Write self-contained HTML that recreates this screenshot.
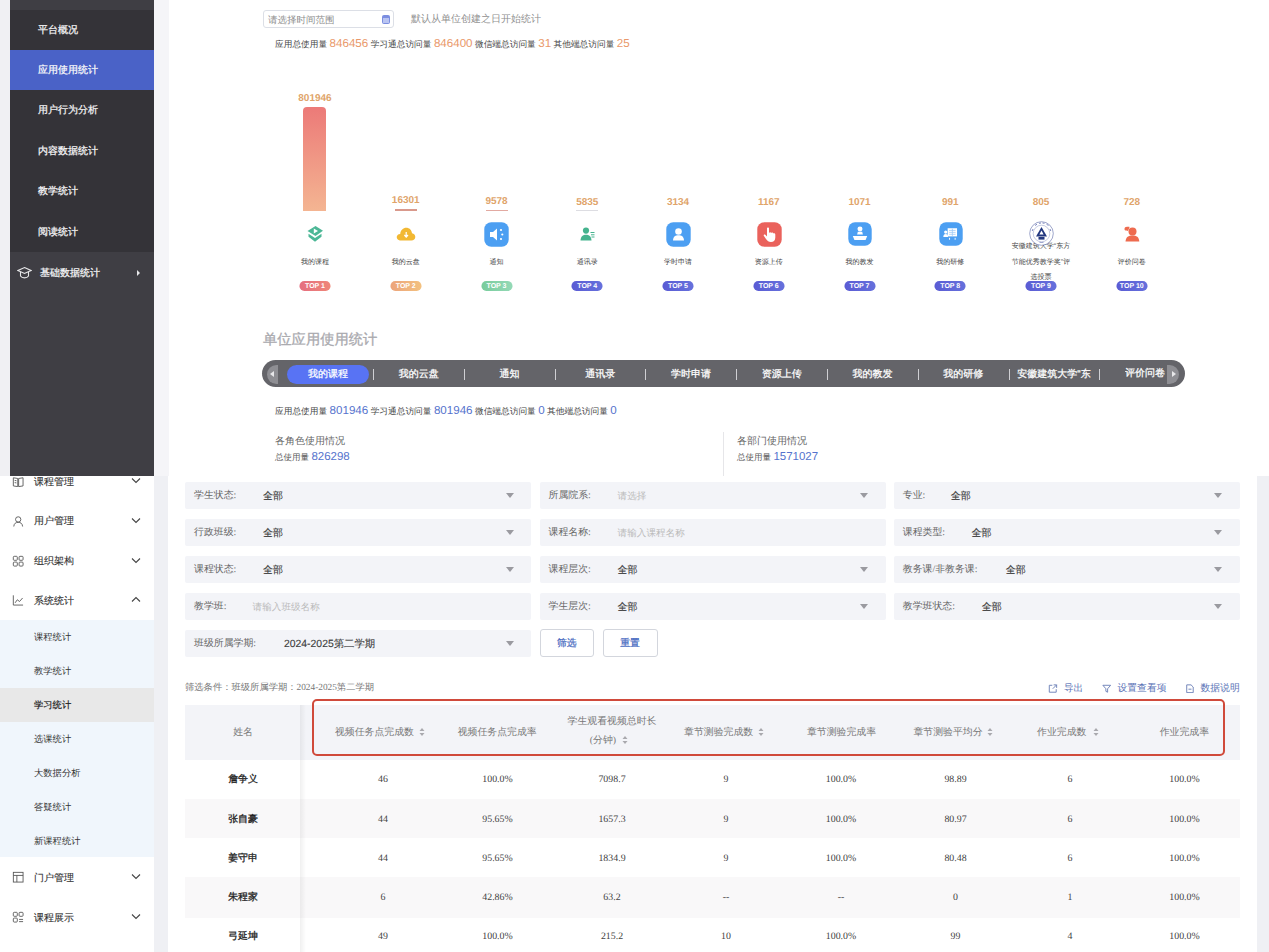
<!DOCTYPE html>
<html><head><meta charset="utf-8">
<style>
*{margin:0;padding:0;box-sizing:border-box}
html,body{width:1269px;height:952px;overflow:hidden;background:#fff;font-family:"Liberation Sans",sans-serif;position:relative;text-rendering:geometricPrecision}
.a{position:absolute;white-space:nowrap}
.c{transform:translateX(-50%)}
.serif{font-family:"Liberation Serif",serif}
/* top sidebar */
#sbTop{position:absolute;left:10px;top:0;width:144px;height:476px;background:#3f3e44}
.ditem{position:absolute;left:10px;width:144px;height:40px;background:#343338;color:#f4f4f6;font-size:10px;-webkit-text-stroke:0.25px #f4f4f6;line-height:41.5px;padding-left:28px}
/* chart */
.val{position:absolute;font-size:10px;font-weight:bold;color:#e0a46a;transform:translateX(-50%);line-height:12px}
.lbl{position:absolute;font-size:7px;color:#444;transform:translateX(-50%);line-height:10px;text-align:center}
.top{position:absolute;width:31px;height:9.6px;border-radius:4.8px;color:#fff;font-size:7px;font-weight:bold;line-height:11px;text-align:center;transform:translateX(-50%)}
.sbar{position:absolute;width:22px;height:2px;transform:translateX(-50%)}
/* tab bar */
.tab{position:absolute;top:361px;color:#fff;font-size:10px;-webkit-text-stroke:0.25px #fff;line-height:27px;transform:translateX(-50%)}
.sep{position:absolute;top:368.5px;width:1px;height:11.5px;background:#cfcfd3}
/* bottom sidebar */
.litem{position:absolute;left:0;width:154px;height:40px;font-size:10px;color:#333;line-height:40px}
.sub{position:absolute;left:34px;font-size:9.3px;color:#333;line-height:12px}
/* filter */
.fbox{position:absolute;width:346px;height:27.5px;background:#f3f4f8;border-radius:2px}
.flbl{position:absolute;top:0;left:9px;font-family:"Liberation Serif",serif;font-size:9.9px;line-height:28.3px;color:#666}
.fval{position:absolute;top:0;font-size:10px;-webkit-text-stroke:0.1px #3a3a3a;line-height:30px;color:#3a3a3a}
.fph{position:absolute;top:0;font-size:9.6px;line-height:29px;color:#bbb}
.farr{position:absolute;top:11.3px;right:17.5px;width:0;height:0;border-left:4px solid transparent;border-right:4px solid transparent;border-top:5px solid #9a9aa0}
/* table */
.th{position:absolute;font-family:"Liberation Serif",serif;font-size:9.9px;color:#777;line-height:14px;transform:translateX(-50%)}
.td{position:absolute;font-family:"Liberation Serif",serif;font-size:9.9px;color:#444;line-height:15px;transform:translateX(-50%)}
</style></head><body>
<!-- ===== TOP HALF ===== -->
<div class="a" style="left:0;top:0;width:10px;height:476px;background:#f0f0f3"></div>
<div class="a" style="left:154px;top:0;width:15px;height:476px;background:#f5f5f8"></div>
<div id="sbTop"></div>
<div class="ditem" style="top:10px">平台概况</div>
<div class="ditem" style="top:50px;background:#4a62c7;color:#fff">应用使用统计</div>
<div class="ditem" style="top:90.4px;height:41px">用户行为分析</div>
<div class="ditem" style="top:130.8px;height:41px">内容数据统计</div>
<div class="ditem" style="top:171.2px;height:41px">教学统计</div>
<div class="ditem" style="top:211.6px;height:40.4px">阅读统计</div>
<div class="a" style="left:40px;top:267px;font-size:10px;-webkit-text-stroke:0.25px #f4f4f6;color:#f4f4f6;line-height:13px">基础数据统计</div>


<!-- top content -->
<div class="a" style="left:262.5px;top:10px;width:131px;height:18px;border:1px solid #dcdfe6;border-radius:3px;background:#fff"></div>
<div class="a" style="left:268px;top:15.2px;font-size:9.5px;line-height:12px;color:#8e8e8e">请选择时间范围</div>
<div class="a" style="left:382px;top:15px;width:8px;height:9px;border-radius:2px;background:#7b8ee0"></div>
<div class="a" style="left:383px;top:18px;width:6px;height:5px;background:#b9c4f2"></div>
<div class="a" style="left:411px;top:13.6px;font-size:10px;line-height:12px;color:#909090">默认从单位创建之日开始统计</div>
<div class="a" style="left:275px;top:36.8px;line-height:13px;color:#444;font-size:8.7px">应用总使用量 <span style="font-size:11.6px;color:#e9986a">846456</span> 学习通总访问量 <span style="font-size:11.6px;color:#e9986a">846400</span> 微信端总访问量 <span style="font-size:11.6px;color:#e9986a">31</span> 其他端总访问量 <span style="font-size:11.6px;color:#e9986a">25</span></div>
<div class="val" style="left:315.0px;top:93px">801946</div>
<div class="a" style="left:303.4px;top:107px;width:22.7px;height:104px;border-radius:4px 4px 0 0;background:linear-gradient(#ec7a78,#f4b592)"></div>
<div class="lbl" style="left:315.0px;top:258px">我的课程</div>
<div class="top" style="left:315.0px;top:281px;background:linear-gradient(90deg,#e56e80,#ef8778)">TOP 1</div>
<div class="val" style="left:405.75px;top:195px">16301</div>
<div class="lbl" style="left:405.75px;top:258px">我的云盘</div>
<div class="top" style="left:405.75px;top:281px;background:linear-gradient(90deg,#eca47c,#f3c17f)">TOP 2</div>
<div class="val" style="left:496.5px;top:196px">9578</div>
<div class="lbl" style="left:496.5px;top:258px">通知</div>
<div class="top" style="left:496.5px;top:281px;background:linear-gradient(90deg,#78cc9c,#94d9b6)">TOP 3</div>
<div class="val" style="left:587.25px;top:197px">5835</div>
<div class="lbl" style="left:587.25px;top:258px">通讯录</div>
<div class="top" style="left:587.25px;top:281px;background:linear-gradient(90deg,#5a5cd4,#6670dc)">TOP 4</div>
<div class="val" style="left:678.0px;top:197px">3134</div>
<div class="lbl" style="left:678.0px;top:258px">学时申请</div>
<div class="top" style="left:678.0px;top:281px;background:linear-gradient(90deg,#5a5cd4,#6670dc)">TOP 5</div>
<div class="val" style="left:768.75px;top:197px">1167</div>
<div class="lbl" style="left:768.75px;top:258px">资源上传</div>
<div class="top" style="left:768.75px;top:281px;background:linear-gradient(90deg,#5a5cd4,#6670dc)">TOP 6</div>
<div class="val" style="left:859.5px;top:197px">1071</div>
<div class="lbl" style="left:859.5px;top:258px">我的教发</div>
<div class="top" style="left:859.5px;top:281px;background:linear-gradient(90deg,#5a5cd4,#6670dc)">TOP 7</div>
<div class="val" style="left:950.25px;top:197px">991</div>
<div class="lbl" style="left:950.25px;top:258px">我的研修</div>
<div class="top" style="left:950.25px;top:281px;background:linear-gradient(90deg,#5a5cd4,#6670dc)">TOP 8</div>
<div class="val" style="left:1041.0px;top:197px">805</div>
<div class="lbl" style="left:1041.0px;top:239px;line-height:15.6px">安徽建筑大学“东方<br>节能优秀教学奖”评<br>选投票</div>
<div class="top" style="left:1041.0px;top:281px;background:linear-gradient(90deg,#5a5cd4,#6670dc)">TOP 9</div>
<div class="val" style="left:1131.75px;top:197px">728</div>
<div class="lbl" style="left:1131.75px;top:258px">评价问卷</div>
<div class="top" style="left:1131.75px;top:281px;background:linear-gradient(90deg,#5a5cd4,#6670dc)">TOP 10</div>


<!-- icons -->
<svg class="a" style="left:306px;top:225px" width="18" height="18" viewBox="0 0 18 18">
<path d="M9.5 1 L17 5.8 L9.5 11 L1.5 6 Z" fill="#4cb796"/>
<path d="M2.5 8.8 L9 13 L15.5 8.8 L15.5 11.8 L9 16.8 L2.5 11.8 Z" fill="#4cb796"/>
<path d="M7.8 3.6 L12 6 L7.8 8.6 Z" fill="#fff"/>
</svg>
<svg class="a" style="left:396px;top:227px" width="20" height="14" viewBox="0 0 20 14">
<path d="M5 13.5 C1.5 13.5 0.5 11 0.8 9.5 C1.2 7.5 3 6.8 4.2 6.9 C4.6 3.2 7.2 0.8 10.2 0.8 C13.3 0.8 15.6 3 16 6.2 C18 6.4 19.4 8 19.3 10 C19.2 12 17.6 13.5 15.5 13.5 Z" fill="#f2b832"/>
<path d="M10.2 5 L10.2 9.5 M8.4 8 L10.2 10 L12 8" stroke="#fff" stroke-width="1.2" fill="none"/>
</svg>
<svg class="a" style="left:484px;top:222px" width="25" height="25" viewBox="0 0 25 25">
<rect x="0.3" y="0.3" width="24.4" height="24.4" rx="7" fill="#4c9ff2"/>
<path d="M6 10 L9 10 L13 6.5 L13 18.5 L9 15 L6 15 Z" fill="#fff"/>
<circle cx="17" cy="8" r="1.1" fill="#fff"/><circle cx="18.3" cy="12.5" r="1.1" fill="#fff"/><circle cx="17" cy="17" r="1.1" fill="#fff"/>
</svg>
<svg class="a" style="left:579px;top:226px" width="17" height="16" viewBox="0 0 17 16">
<circle cx="7" cy="4.6" r="3.1" fill="#45b38e"/>
<path d="M1.5 14.5 C1.8 10.3 4 8.8 7 8.8 C10 8.8 12.2 10.3 12.5 14.5 Z" fill="#45b38e"/>
<path d="M11.5 6.5 L15.5 6.5 M12 8.8 L15.5 8.8 M12.5 11 L15.5 11" stroke="#45b38e" stroke-width="1"/>
</svg>
<svg class="a" style="left:666px;top:222px" width="25" height="25" viewBox="0 0 25 25">
<rect x="0.3" y="0.3" width="24.4" height="24.4" rx="7" fill="#4c9ff2"/>
<circle cx="12.5" cy="9.5" r="3.3" fill="#fff"/>
<path d="M7 18.5 C7.2 14.5 9.5 13.3 12.5 13.3 C15.5 13.3 17.8 14.5 18 18.5 Z" fill="#fff"/>
</svg>
<svg class="a" style="left:757px;top:222px" width="25" height="25" viewBox="0 0 25 25">
<rect x="0.3" y="0.3" width="24.4" height="24.4" rx="7" fill="#ea625c"/>
<path d="M10 6.5 C10 5.2 12 5.2 12 6.5 L12 11 C12.5 10 14 10.2 14.2 11 C14.8 10.3 16.2 10.6 16.4 11.5 C17 11 18.3 11.4 18.3 12.5 L18.3 15.5 C18.3 18.5 16.5 20 14 20 C11.5 20 10.5 19 9 17 L6.8 13.8 C6.2 12.8 7.5 12 8.3 12.8 L10 14.5 Z" fill="#fff"/>
</svg>
<svg class="a" style="left:848px;top:222px" width="24" height="24" viewBox="0 0 25 25">
<rect x="0.3" y="0.3" width="24.4" height="24.4" rx="7" fill="#4c9ff2"/>
<circle cx="12.5" cy="7.3" r="2.6" fill="#fff"/>
<path d="M10.2 10.2 L14.8 10.2 L15.5 13 L9.5 13 Z" fill="#fff"/>
<path d="M5 14.5 L20 14.5 L18.3 18.8 L6.7 18.8 Z" fill="#fff"/>
</svg>
<svg class="a" style="left:938.5px;top:222px" width="24" height="24" viewBox="0 0 25 25">
<rect x="0.3" y="0.3" width="24.4" height="24.4" rx="7" fill="#4c9ff2"/>
<rect x="9" y="6.5" width="9.8" height="8.5" fill="#fff"/>
<path d="M10.5 8.8 L17.3 8.8 M10.5 10.8 L17.3 10.8 M10.5 12.8 L17.3 12.8 M13.9 7 L13.9 14.5" stroke="#9ccaf7" stroke-width="0.8"/>
<circle cx="7" cy="10.5" r="1.7" fill="#fff"/>
<path d="M4.5 15.5 C4.6 13.3 5.6 12.6 7 12.6 C8.4 12.6 9.4 13.3 9.5 15.5 Z" fill="#fff"/>
<path d="M11 16.5 L11 18.5 M16.8 16.5 L16.8 18.5" stroke="#fff" stroke-width="1"/>
</svg>
<svg class="a" style="left:1028.5px;top:221px" width="25" height="25" viewBox="0 0 25 25">
<circle cx="12.5" cy="12.5" r="11.8" fill="#fff" stroke="#5c6aa8" stroke-width="0.6"/>
<circle cx="12.5" cy="12.5" r="8.3" fill="#fff" stroke="#8a94c4" stroke-width="0.5"/>
<path d="M6 4.5 L8 3.2 M10 2.3 L12 2 M13.5 2 L15.5 2.3 M17.5 3.2 L19.5 4.5 M4 8 L3.2 10 M21 8 L21.8 10" stroke="#6e7ab8" stroke-width="0.9"/>
<path d="M12.5 6 L18 15.5 L7 15.5 Z" fill="#22377f"/>
<path d="M12.5 9.5 L14.6 13.5 L10.4 13.5 Z" fill="#fff"/>
<rect x="9.5" y="16" width="6" height="2.6" fill="#22377f"/>
<path d="M10.5 21.5 L14.5 21.5" stroke="#8a94c4" stroke-width="0.8"/>
</svg>
<svg class="a" style="left:1122px;top:224px" width="20" height="20" viewBox="0 0 20 20">
<circle cx="10.5" cy="7.5" r="4" fill="#ee6b4f"/>
<path d="M3.5 17.5 C3.8 13 6.5 11.5 10.5 11.5 C14.5 11.5 17 13 17.3 17.5 Z" fill="#ee6b4f"/>
<path d="M2.5 5 C2.5 3.5 3.5 2.8 5 2.8 L7 2.8 C7.5 2.8 7.6 3.3 7.4 3.7 L6 7 L4.5 6.5 C3 6.5 2.5 6 2.5 5 Z" fill="#ee6b4f"/>
</svg>
<div class="sbar" style="left:405.75px;top:209px;background:#d9998c"></div>
<div class="sbar" style="left:496.5px;top:209.5px;height:1.5px;background:#e2aaa2"></div>
<div class="sbar" style="left:587.25px;top:209.5px;height:1.5px;background:#dddde2"></div>
<!-- section 2 -->
<div class="a" style="left:263px;top:331px;font-size:14.3px;line-height:18px;color:#a9a9ae;-webkit-text-stroke:0.3px #a9a9ae">单位应用使用统计</div>
<div class="a" style="left:262px;top:360px;width:923px;height:27px;border-radius:13.5px;background:#646469"></div>
<div class="a" style="left:266.5px;top:364.5px;width:11.5px;height:19px;border-radius:9.5px 0 0 9.5px;background:#8e8e93"></div>
<div class="a" style="left:269.5px;top:371px;width:0;height:0;border-top:3px solid transparent;border-bottom:3px solid transparent;border-right:4px solid #e8e8ea"></div>
<div class="a" style="left:1167px;top:364.5px;width:11.5px;height:19px;border-radius:0 9.5px 9.5px 0;background:#8e8e93"></div>
<div class="a" style="left:1171.5px;top:371px;width:0;height:0;border-top:3px solid transparent;border-bottom:3px solid transparent;border-left:4px solid #e8e8ea"></div>
<div class="a" style="left:287px;top:364.5px;width:82px;height:19.5px;border-radius:10px;background:#5873f4"></div>
<div class="tab" style="left:328.0px">我的课程</div>
<div class="tab" style="left:418.75px">我的云盘</div>
<div class="tab" style="left:509.5px">通知</div>
<div class="tab" style="left:600.25px">通讯录</div>
<div class="tab" style="left:691.0px">学时申请</div>
<div class="tab" style="left:781.75px">资源上传</div>
<div class="tab" style="left:872.5px">我的教发</div>
<div class="tab" style="left:963.25px">我的研修</div>
<div class="tab" style="left:1054px">安徽建筑大学“东</div>
<div class="a" style="left:1125px;top:360px;width:40px;overflow:hidden;color:#fff;font-size:10px;-webkit-text-stroke:0.25px #fff;line-height:28px">评价问卷</div>
<div class="sep" style="left:373px"></div>
<div class="sep" style="left:464px"></div>
<div class="sep" style="left:554.7px"></div>
<div class="sep" style="left:645px"></div>
<div class="sep" style="left:736px"></div>
<div class="sep" style="left:827px"></div>
<div class="sep" style="left:918px"></div>
<div class="sep" style="left:1009px"></div>
<div class="sep" style="left:1099px"></div>

<div class="a" style="left:275px;top:403.5px;line-height:13px;color:#444;font-size:8.7px">应用总使用量 <span style="font-size:11.6px;color:#5573cd">801946</span> 学习通总访问量 <span style="font-size:11.6px;color:#5573cd">801946</span> 微信端总访问量 <span style="font-size:11.6px;color:#5573cd">0</span> 其他端总访问量 <span style="font-size:11.6px;color:#5573cd">0</span></div>
<div class="a" style="left:275px;top:435px;font-size:10px;line-height:13px;color:#666">各角色使用情况</div>
<div class="a" style="left:275px;top:450.5px;font-size:8.5px;line-height:13px;color:#555">总使用量 <span style="font-size:11.5px;color:#5573cd">826298</span></div>
<div class="a" style="left:722.5px;top:432px;width:1px;height:44px;background:#e6e6e9"></div>
<div class="a" style="left:737px;top:435px;font-size:10px;line-height:13px;color:#666">各部门使用情况</div>
<div class="a" style="left:737px;top:450.5px;font-size:8.5px;line-height:13px;color:#555">总使用量 <span style="font-size:11.5px;color:#5573cd">1571027</span></div>

<!-- ===== BOTTOM HALF ===== -->
<div class="a" style="left:0;top:476px;width:154px;height:476px;background:#fff"></div>
<div class="a" style="left:154px;top:476px;width:14px;height:476px;background:#eff0f4"></div>
<div class="a" style="left:1257px;top:476px;width:12px;height:476px;background:#eff0f4"></div>


<!-- bottom sidebar -->
<div class="a" style="left:0;top:619.5px;width:154px;height:237.5px;background:#f0f6fc"></div>
<div class="a" style="left:0;top:688px;width:154px;height:33.5px;background:#e8e8e8"></div>
<div class="a" style="left:34px;top:475.7px;font-size:10px;line-height:13px;color:#333;-webkit-text-stroke:0.12px #333">课程管理</div>
<div class="a" style="left:34px;top:515.2px;font-size:10px;line-height:13px;color:#333;-webkit-text-stroke:0.12px #333">用户管理</div>
<div class="a" style="left:34px;top:555.2px;font-size:10px;line-height:13px;color:#333;-webkit-text-stroke:0.12px #333">组织架构</div>
<div class="a" style="left:34px;top:594.7px;font-size:10px;line-height:13px;color:#333;-webkit-text-stroke:0.12px #333">系统统计</div>
<div class="sub" style="top:630.5px">课程统计</div>
<div class="sub" style="top:664.5px">教学统计</div>
<div class="sub" style="top:698.5px;-webkit-text-stroke:0.2px #222;color:#222">学习统计</div>
<div class="sub" style="top:733px">选课统计</div>
<div class="sub" style="top:767px">大数据分析</div>
<div class="sub" style="top:800.5px">答疑统计</div>
<div class="sub" style="top:834.5px">新课程统计</div>
<div class="a" style="left:34px;top:871.8px;font-size:10px;line-height:13px;color:#333;-webkit-text-stroke:0.12px #333">门户管理</div>
<div class="a" style="left:34px;top:912px;font-size:10px;line-height:13px;color:#333;-webkit-text-stroke:0.12px #333">课程展示</div>
<div class="a" style="left:34px;top:952px;font-size:10px;line-height:13px;color:#333;-webkit-text-stroke:0.12px #333">数据管理</div>
<svg class="a" style="left:11.8px;top:475.8px" width="12.4" height="11.5" viewBox="0 0 14 13"><path d="M1.5 2 L6.5 2.8 L6.5 12 L1.5 11.2 Z M12.5 2 L7.5 2.8 L7.5 12 L12.5 11.2 Z M3 5 L5 5.3 M3 7.5 L5 7.8" stroke="#555" stroke-width="1" fill="none"/></svg>
<svg class="a" style="left:11.8px;top:514.8px" width="12.4" height="12.4" viewBox="0 0 14 14"><circle cx="7" cy="5" r="3" stroke="#555" stroke-width="1" fill="none"/><path d="M2 13 C2.3 9.5 4.3 8.3 7 8.3 C9.7 8.3 11.7 9.5 12 13" stroke="#555" stroke-width="1" fill="none"/></svg>
<svg class="a" style="left:11.8px;top:554.8px" width="12.4" height="12.4" viewBox="0 0 14 14"><rect x="1.5" y="1.5" width="4.5" height="4.5" rx="1" stroke="#555" stroke-width="1" fill="none"/><rect x="8" y="1.5" width="4.5" height="4.5" rx="1" stroke="#555" stroke-width="1" fill="none"/><rect x="1.5" y="8" width="4.5" height="4.5" rx="1" stroke="#555" stroke-width="1" fill="none"/><rect x="8" y="8" width="4.5" height="4.5" rx="1" stroke="#555" stroke-width="1" fill="none"/></svg>
<svg class="a" style="left:11.8px;top:593.8px" width="12.4" height="12.4" viewBox="0 0 14 14"><path d="M1.5 1.5 L1.5 12.5 L12.5 12.5" stroke="#555" stroke-width="1" fill="none"/><path d="M3.5 10 L6 6.5 L8.5 8.5 L12 4.5" stroke="#555" stroke-width="1" fill="none"/></svg>
<svg class="a" style="left:11.8px;top:870.8px" width="12.4" height="12.4" viewBox="0 0 14 14"><rect x="1.5" y="1.5" width="11" height="11" stroke="#555" stroke-width="1" fill="none"/><path d="M1.5 5 L12.5 5 M5.5 5 L5.5 12.5" stroke="#555" stroke-width="1" fill="none"/></svg>
<svg class="a" style="left:11.8px;top:910.8px" width="12.4" height="12.4" viewBox="0 0 14 14"><rect x="1.5" y="1.5" width="4.5" height="4.5" rx="1" stroke="#555" stroke-width="1" fill="none"/><rect x="8" y="1.5" width="4.5" height="4.5" rx="1" stroke="#555" stroke-width="1" fill="none"/><rect x="1.5" y="8" width="4.5" height="4.5" rx="1" stroke="#555" stroke-width="1" fill="none"/><path d="M8 9.5 L12.5 9.5 M8 12 L12.5 12" stroke="#555" stroke-width="1" fill="none"/></svg>
<svg class="a" style="left:131px;top:477px" width="10" height="7" viewBox="0 0 10 7"><path d="M1 1.5 L5 5.5 L9 1.5" stroke="#444" stroke-width="1.1" fill="none"/></svg>
<svg class="a" style="left:131px;top:517px" width="10" height="7" viewBox="0 0 10 7"><path d="M1 1.5 L5 5.5 L9 1.5" stroke="#444" stroke-width="1.1" fill="none"/></svg>
<svg class="a" style="left:131px;top:557px" width="10" height="7" viewBox="0 0 10 7"><path d="M1 1.5 L5 5.5 L9 1.5" stroke="#444" stroke-width="1.1" fill="none"/></svg>
<svg class="a" style="left:131px;top:873px" width="10" height="7" viewBox="0 0 10 7"><path d="M1 1.5 L5 5.5 L9 1.5" stroke="#444" stroke-width="1.1" fill="none"/></svg>
<svg class="a" style="left:131px;top:913px" width="10" height="7" viewBox="0 0 10 7"><path d="M1 1.5 L5 5.5 L9 1.5" stroke="#444" stroke-width="1.1" fill="none"/></svg>
<svg class="a" style="left:131px;top:596px" width="10" height="7" viewBox="0 0 10 7"><path d="M1 5.5 L5 1.5 L9 5.5" stroke="#444" stroke-width="1.1" fill="none"/></svg>
<svg class="a" style="left:17px;top:266px" width="15" height="14" viewBox="0 0 15 14"><path d="M7.5 1.5 L14 4.5 L7.5 7.5 L1 4.5 Z" stroke="#e6e6e8" stroke-width="1.1" fill="none"/><path d="M3.5 6 L3.5 10 C5 12.5 10 12.5 11.5 10 L11.5 6" stroke="#e6e6e8" stroke-width="1.1" fill="none"/></svg>
<div class="a" style="left:137px;top:269.5px;width:0;height:0;border-top:3px solid transparent;border-bottom:3px solid transparent;border-left:3.5px solid #e6e6e8"></div>
<!-- table -->
<div class="a" style="left:185px;top:705px;width:1055px;height:55px;background:#f3f4f8"></div>
<div class="a" style="left:185px;top:760.0px;width:1055px;height:39.5px;background:#fff"></div>
<div class="a" style="left:185px;top:798.8px;width:1055px;height:39.5px;background:#f9f8f9"></div>
<div class="a" style="left:185px;top:839.0px;width:1055px;height:39.5px;background:#fff"></div>
<div class="a" style="left:185px;top:877.4px;width:1055px;height:40.2px;background:#f9f8f9"></div>
<div class="a" style="left:185px;top:918.0px;width:1055px;height:39.5px;background:#fff"></div>
<div class="a" style="left:300px;top:705px;width:6px;height:247px;background:linear-gradient(to right,rgba(0,0,0,0.06),rgba(0,0,0,0))"></div>
<div class="th" style="left:243px;top:726px">姓名</div>
<div class="th" style="left:374.4px;top:726px">视频任务点完成数</div>
<svg class="a" style="left:419px;top:726.8px" width="6" height="10" viewBox="0 0 6 10"><path d="M0.5 4 L3 1 L5.5 4 Z M0.5 6 L3 9 L5.5 6 Z" fill="#a9a9ae"/></svg>
<div class="th" style="left:497.2px;top:726px">视频任务点完成率</div>
<div class="th" style="left:718.6px;top:726px">章节测验完成数</div>
<svg class="a" style="left:758px;top:726.8px" width="6" height="10" viewBox="0 0 6 10"><path d="M0.5 4 L3 1 L5.5 4 Z M0.5 6 L3 9 L5.5 6 Z" fill="#a9a9ae"/></svg>
<div class="th" style="left:841.5px;top:726px">章节测验完成率</div>
<div class="th" style="left:948px;top:726px">章节测验平均分</div>
<svg class="a" style="left:987px;top:726.8px" width="6" height="10" viewBox="0 0 6 10"><path d="M0.5 4 L3 1 L5.5 4 Z M0.5 6 L3 9 L5.5 6 Z" fill="#a9a9ae"/></svg>
<div class="th" style="left:1061.8px;top:726px">作业完成数</div>
<svg class="a" style="left:1092.5px;top:726.8px" width="6" height="10" viewBox="0 0 6 10"><path d="M0.5 4 L3 1 L5.5 4 Z M0.5 6 L3 9 L5.5 6 Z" fill="#a9a9ae"/></svg>
<div class="th" style="left:1184.4px;top:726px">作业完成率</div>
<div class="th" style="left:612px;top:714.5px">学生观看视频总时长</div>
<div class="th" style="left:603px;top:733.5px">(分钟)</div>
<svg class="a" style="left:622px;top:734.5px" width="6" height="10" viewBox="0 0 6 10"><path d="M0.5 4 L3 1 L5.5 4 Z M0.5 6 L3 9 L5.5 6 Z" fill="#a9a9ae"/></svg>
<div class="a" style="left:311.5px;top:698.8px;width:913.5px;height:57.2px;border:2.7px solid #d04a3b;border-radius:5px"></div>
<div class="td" style="left:243px;top:772.1px;-webkit-text-stroke:0.3px #222;color:#222;">詹争义</div>
<div class="td" style="left:383px;top:773.7px;line-height:12.6px">46</div>
<div class="td" style="left:497.5px;top:773.7px;line-height:12.6px">100.0%</div>
<div class="td" style="left:612px;top:773.7px;line-height:12.6px">7098.7</div>
<div class="td" style="left:726px;top:773.7px;line-height:12.6px">9</div>
<div class="td" style="left:841px;top:773.7px;line-height:12.6px">100.0%</div>
<div class="td" style="left:955.5px;top:773.7px;line-height:12.6px">98.89</div>
<div class="td" style="left:1070px;top:773.7px;line-height:12.6px">6</div>
<div class="td" style="left:1184.5px;top:773.7px;line-height:12.6px">100.0%</div>
<div class="td" style="left:243px;top:811.5px;-webkit-text-stroke:0.3px #222;color:#222;">张自豪</div>
<div class="td" style="left:383px;top:813.6px;line-height:12.6px">44</div>
<div class="td" style="left:497.5px;top:813.6px;line-height:12.6px">95.65%</div>
<div class="td" style="left:612px;top:813.6px;line-height:12.6px">1657.3</div>
<div class="td" style="left:726px;top:813.6px;line-height:12.6px">9</div>
<div class="td" style="left:841px;top:813.6px;line-height:12.6px">100.0%</div>
<div class="td" style="left:955.5px;top:813.6px;line-height:12.6px">80.97</div>
<div class="td" style="left:1070px;top:813.6px;line-height:12.6px">6</div>
<div class="td" style="left:1184.5px;top:813.6px;line-height:12.6px">100.0%</div>
<div class="td" style="left:243px;top:850.7px;-webkit-text-stroke:0.3px #222;color:#222;">姜守申</div>
<div class="td" style="left:383px;top:852.5px;line-height:12.6px">44</div>
<div class="td" style="left:497.5px;top:852.5px;line-height:12.6px">95.65%</div>
<div class="td" style="left:612px;top:852.5px;line-height:12.6px">1834.9</div>
<div class="td" style="left:726px;top:852.5px;line-height:12.6px">9</div>
<div class="td" style="left:841px;top:852.5px;line-height:12.6px">100.0%</div>
<div class="td" style="left:955.5px;top:852.5px;line-height:12.6px">80.48</div>
<div class="td" style="left:1070px;top:852.5px;line-height:12.6px">6</div>
<div class="td" style="left:1184.5px;top:852.5px;line-height:12.6px">100.0%</div>
<div class="td" style="left:243px;top:889.9px;-webkit-text-stroke:0.3px #222;color:#222;">朱程家</div>
<div class="td" style="left:383px;top:891.6px;line-height:12.6px">6</div>
<div class="td" style="left:497.5px;top:891.6px;line-height:12.6px">42.86%</div>
<div class="td" style="left:612px;top:891.6px;line-height:12.6px">63.2</div>
<div class="td" style="left:726px;top:891.6px;line-height:12.6px">--</div>
<div class="td" style="left:841px;top:891.6px;line-height:12.6px">--</div>
<div class="td" style="left:955.5px;top:891.6px;line-height:12.6px">0</div>
<div class="td" style="left:1070px;top:891.6px;line-height:12.6px">1</div>
<div class="td" style="left:1184.5px;top:891.6px;line-height:12.6px">100.0%</div>
<div class="td" style="left:243px;top:929.1px;-webkit-text-stroke:0.3px #222;color:#222;">弓延坤</div>
<div class="td" style="left:383px;top:930.7px;line-height:12.6px">49</div>
<div class="td" style="left:497.5px;top:930.7px;line-height:12.6px">100.0%</div>
<div class="td" style="left:612px;top:930.7px;line-height:12.6px">215.2</div>
<div class="td" style="left:726px;top:930.7px;line-height:12.6px">10</div>
<div class="td" style="left:841px;top:930.7px;line-height:12.6px">100.0%</div>
<div class="td" style="left:955.5px;top:930.7px;line-height:12.6px">99</div>
<div class="td" style="left:1070px;top:930.7px;line-height:12.6px">4</div>
<div class="td" style="left:1184.5px;top:930.7px;line-height:12.6px">100.0%</div>
<!-- filters -->
<div class="fbox" style="left:185px;top:481.7px"><span class="flbl">学生状态:</span><span class="fval" style="left:78px">全部</span><span class="farr"></span></div>
<div class="fbox" style="left:539.6px;top:481.7px"><span class="flbl">所属院系:</span><span class="fph" style="left:78px">请选择</span><span class="farr"></span></div>
<div class="fbox" style="left:893.8px;top:481.7px"><span class="flbl">专业:</span><span class="fval" style="left:57px">全部</span><span class="farr"></span></div>
<div class="fbox" style="left:185px;top:518.9px"><span class="flbl">行政班级:</span><span class="fval" style="left:78px">全部</span><span class="farr"></span></div>
<div class="fbox" style="left:539.6px;top:518.9px"><span class="flbl">课程名称:</span><span class="fph" style="left:78px">请输入课程名称</span></div>
<div class="fbox" style="left:893.8px;top:518.9px"><span class="flbl">课程类型:</span><span class="fval" style="left:77.6px">全部</span><span class="farr"></span></div>
<div class="fbox" style="left:185px;top:555.9px"><span class="flbl">课程状态:</span><span class="fval" style="left:78px">全部</span><span class="farr"></span></div>
<div class="fbox" style="left:539.6px;top:555.9px"><span class="flbl">课程层次:</span><span class="fval" style="left:78px">全部</span><span class="farr"></span></div>
<div class="fbox" style="left:893.8px;top:555.9px"><span class="flbl">教务课/非教务课:</span><span class="fval" style="left:112px">全部</span><span class="farr"></span></div>
<div class="fbox" style="left:185px;top:592.8px"><span class="flbl">教学班:</span><span class="fph" style="left:67.6px">请输入班级名称</span></div>
<div class="fbox" style="left:539.6px;top:592.8px"><span class="flbl">学生层次:</span><span class="fval" style="left:78px">全部</span><span class="farr"></span></div>
<div class="fbox" style="left:893.8px;top:592.8px"><span class="flbl">教学班状态:</span><span class="fval" style="left:88px">全部</span><span class="farr"></span></div>
<div class="fbox" style="left:185px;top:629.7px"><span class="flbl">班级所属学期:</span><span class="fval" style="left:99px;font-size:10.4px">2024-2025第二学期</span><span class="farr"></span></div>
<div class="a" style="left:539.6px;top:629px;width:54.5px;height:28px;border:1px solid #d3d6dd;border-radius:3px;background:#fff;text-align:center;line-height:28px;font-size:9.8px;color:#4468c0;-webkit-text-stroke:0.2px #4468c0;font-family:'Liberation Serif',serif">筛选</div>
<div class="a" style="left:602.5px;top:629px;width:55px;height:28px;border:1px solid #d3d6dd;border-radius:3px;background:#fff;text-align:center;line-height:28px;font-size:9.8px;color:#4468c0;-webkit-text-stroke:0.2px #4468c0;font-family:'Liberation Serif',serif">重置</div>
<div class="a serif" style="left:185px;top:682.2px;font-size:9.3px;line-height:12px;color:#777">筛选条件：班级所属学期：2024-2025第二学期</div>
<svg class="a" style="left:1048px;top:683.5px" width="9.5" height="9.5" viewBox="0 0 11 11"><path d="M5 1.5 L1.5 1.5 L1.5 9.5 L9.5 9.5 L9.5 6 M6.5 1 L10 1 L10 4.5 M10 1 L5.5 5.5" stroke="#6f83b8" stroke-width="1.1" fill="none"/></svg>
<div class="a serif" style="left:1064px;top:682.5px;font-size:9.6px;line-height:12px;color:#5a73b6">导出</div>
<svg class="a" style="left:1101.5px;top:683.5px" width="9.5" height="9.5" viewBox="0 0 11 11"><path d="M1 1.5 L10 1.5 L6.5 5.5 L6.5 9.5 L4.5 8.5 L4.5 5.5 Z" stroke="#6f83b8" stroke-width="1.1" fill="none"/></svg>
<div class="a serif" style="left:1117.5px;top:682.5px;font-size:9.8px;line-height:12px;color:#5a73b6">设置查看项</div>
<svg class="a" style="left:1185px;top:683.5px" width="9.5" height="9.5" viewBox="0 0 11 11"><path d="M2 1 L7 1 L9.5 3.5 L9.5 10 L2 10 Z M4 6 L7.5 6" stroke="#6f83b8" stroke-width="1.1" fill="none"/></svg>
<div class="a serif" style="left:1200.5px;top:682.5px;font-size:9.8px;line-height:12px;color:#5a73b6">数据说明</div>
</body></html>
